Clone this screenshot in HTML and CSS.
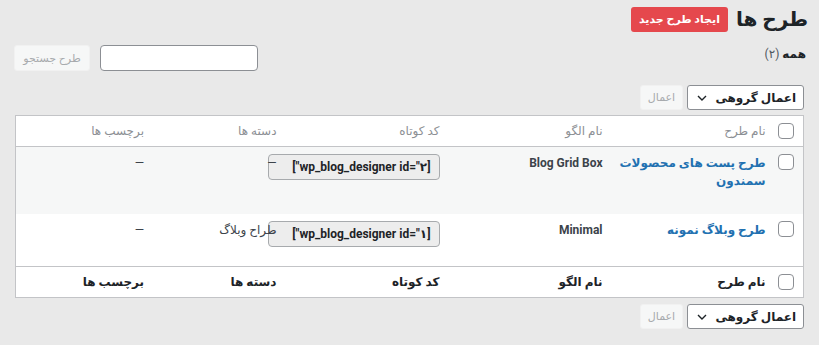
FILE: index.html
```html
<!DOCTYPE html>
<html lang="fa" dir="rtl">

<head>
   <meta charset="UTF-8">
   <meta name="viewport" content="width=device-width, initial-scale=1.0">
   <title>طرح ها</title>
   <link rel="stylesheet" href="styles.css">
</head>

<body>
   <div class="wrap">
      <div class="page-head">
         <h1>طرح ها</h1>
         <a href="#" class="btn-new">ایجاد طرح جدید</a>
      </div>

      <div class="filter-bar">
         <div class="views"><b>همه</b> <span class="count">(۲)</span></div>
         <div class="search-box">
            <input type="search">
            <button class="btn-light">طرح جستجو</button>
         </div>
      </div>

      <div class="tablenav">
         <div class="bulk-select">
            <span>اعمال گروهی</span>
            <svg width="10" height="6" viewBox="0 0 10 6"><path d="M1 1l4 4 4-4" fill="none" stroke="#1d2327" stroke-width="1.4"/></svg>
         </div>
         <button class="btn-light">اعمال</button>
      </div>

      <table class="list">
         <thead>
            <tr>
               <th class="col-cb"><span class="cb"></span></th>
               <th class="col-name">نام طرح</th>
               <th class="col-mid">نام الگو</th>
               <th class="col-mid">کد کوتاه</th>
               <th class="col-side">دسته ها</th>
               <th class="col-side">برچسب ها</th>
            </tr>
         </thead>
         <tbody>
            <tr class="row-tall alt">
               <td><span class="cb"></span></td>
               <td><a href="#" class="title">طرح پست های محصولات<br>سمندون</a></td>
               <td class="tpl">Blog Grid Box</td>
               <td><input class="shortcode" type="text" readonly value='[wp_blog_designer id="۲"]'></td>
               <td>—</td>
               <td>—</td>
            </tr>
            <tr class="row-short">
               <td><span class="cb"></span></td>
               <td><a href="#" class="title">طرح وبلاگ نمونه</a></td>
               <td class="tpl">Minimal</td>
               <td><input class="shortcode" type="text" readonly value='[wp_blog_designer id="۱"]'></td>
               <td>طراح وبلاگ</td>
               <td>—</td>
            </tr>
         </tbody>
         <tfoot>
            <tr>
               <th><span class="cb"></span></th>
               <th>نام طرح</th>
               <th>نام الگو</th>
               <th>کد کوتاه</th>
               <th>دسته ها</th>
               <th>برچسب ها</th>
            </tr>
         </tfoot>
      </table>

      <div class="tablenav bottom">
         <div class="bulk-select">
            <span>اعمال گروهی</span>
            <svg width="10" height="6" viewBox="0 0 10 6"><path d="M1 1l4 4 4-4" fill="none" stroke="#1d2327" stroke-width="1.4"/></svg>
         </div>
         <button class="btn-light">اعمال</button>
      </div>
   </div>
</body>

</html>
```

FILE: styles.css
```css
* {
   margin: 0;
   padding: 0;
   box-sizing: border-box;
}

body {
   background: #e9e9e9;
   font-family: Roboto, 'DejaVu Sans', sans-serif;
   font-size: 12px;
   color: #3c434a;
}

.wrap {
   padding: 7px 15px 0;
}

.page-head {
   display: flex;
   align-items: center;
   gap: 8px;
   height: 25px;
   margin-right: -4px;
}

.page-head h1 {
   font-size: 20px;
   font-weight: 700;
   color: #1d2327;
   line-height: 25px;
}

.btn-new {
   background: #e5484d;
   color: #fff;
   font-weight: 700;
   font-size: 11px;
   height: 25px;
   line-height: 25px;
   padding: 0 8px;
   border-radius: 3px;
   text-decoration: none;
}

.filter-bar {
   display: flex;
   justify-content: space-between;
   align-items: flex-start;
   margin-top: 13px;
}

.views {
   margin-right: -2px;
   line-height: 18px;
   font-size: 12px;
}

.views b {
   color: #1d2327;
}

.views .count {
   color: #50575e;
}

.search-box {
   display: flex;
   gap: 10px;
   margin-left: -1px;
}

.search-box input {
   width: 158px;
   height: 26px;
   border: 1px solid #8c8f94;
   border-radius: 4px;
   background: #fff;
   outline: none;
}

.btn-light {
   background: #f6f7f7;
   border: 1px solid #f1f1f1;
   border-radius: 3px;
   color: #a7aaad;
   font: inherit;
   font-size: 11px;
   height: 26px;
   width: 76px;
}

.tablenav {
   display: flex;
   align-items: center;
   gap: 4px;
   margin-top: 14px;
}

.tablenav.bottom {
   margin-top: 6px;
}

.tablenav .btn-light {
   height: 25px;
   width: 43px;
}

.bulk-select {
   display: flex;
   align-items: center;
   justify-content: space-between;
   width: 117px;
   height: 25px;
   padding: 0 7px 0 9px;
   background: #fff;
   border: 1px solid #8c8f94;
   border-radius: 3px;
   font-weight: 700;
   color: #1d2327;
}

.list {
   width: 100%;
   margin-top: 5px;
   border-collapse: collapse;
   table-layout: fixed;
   background: #fff;
   border: 1px solid #c3c4c7;
}

.list th {
   height: 31px;
   padding: 0 4px;
   text-align: right;
   vertical-align: middle;
   font-weight: 400;
   color: #8c8f94;
}

.list thead tr {
   border-bottom: 1px solid #c3c4c7;
}

.list tfoot tr {
   border-top: 1px solid #c3c4c7;
}

.list tfoot th {
   color: #1d2327;
   font-weight: 600;
}

.col-cb {
   width: 34px;
}

.col-name,
.col-mid {
   width: 163px;
}

.list th:first-child,
.list td:first-child {
   padding-right: 9px;
}

.list td {
   padding: 7px 4px 0;
   vertical-align: top;
   line-height: 18px;
   color: #3c434a;
}

.row-tall {
   height: 67px;
}

.row-short {
   height: 53px;
}

.alt {
   background: #f6f7f7;
}

.cb {
   display: block;
   width: 16px;
   height: 16px;
   border: 1px solid #8c8f94;
   border-radius: 4px;
   background: #fff;
}

.title {
   color: #2271b1;
   font-weight: 700;
   font-size: 12px;
   white-space: nowrap;
   text-decoration: none;
}

.tpl {
   font-weight: 700;
}

.shortcode {
   width: 172px;
   height: 26px;
   padding: 0 8px;
   border: 1px solid #a7aaad;
   border-radius: 4px;
   background: #ededed;
   font-family: Roboto, 'DejaVu Sans', sans-serif;
   font-size: 12px;
   font-weight: 700;
   color: #1d2327;
   text-align: right;
   direction: rtl;
   outline: none;
}
```
